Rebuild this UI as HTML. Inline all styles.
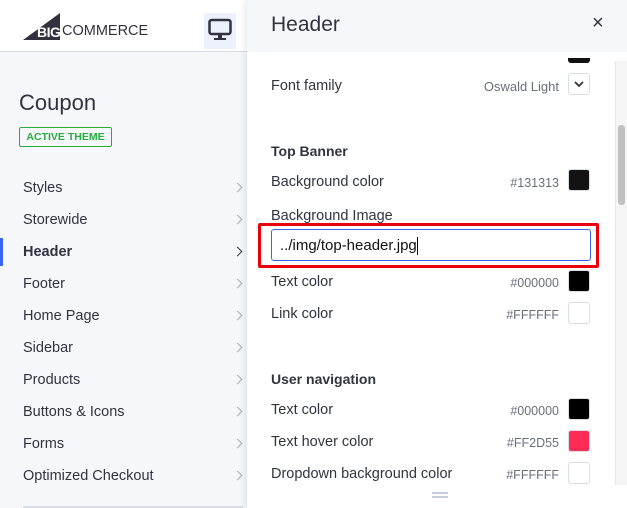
<!DOCTYPE html>
<html><head><style>
*{margin:0;padding:0;box-sizing:border-box}
body{width:627px;height:508px;overflow:hidden;font-family:"Liberation Sans",sans-serif;background:#fff;position:relative;color:#313440}
.left{position:absolute;left:0;top:0;width:247px;height:508px;background:#f5f7fb}
.top{position:absolute;left:0;top:0;width:247px;height:52px;background:#fff;border-bottom:1px solid #d9dce9}
.nav{position:absolute;left:23px;font-size:14.5px;color:#313440}
.chev{position:absolute;left:234px;width:7px;height:7px;border-right:1.6px solid #a8acb8;border-top:1.6px solid #a8acb8;transform:rotate(45deg)}
.right{position:absolute;left:247px;top:0;width:380px;height:508px;background:#fff;box-shadow:-3px 0 6px rgba(0,0,0,.08)}
.rh{position:absolute;left:0;top:0;width:380px;height:52px;background:#f5f7fb}
.lab{position:absolute;left:271px;font-size:14.5px;color:#313440}
.hex{position:absolute;right:68px;font-size:12.5px;color:#6b6f7c}
.sw{position:absolute;left:568px;width:22px;height:22px;border-radius:3px;border:1px solid #d9dce9}
.sec{position:absolute;left:271px;font-size:14px;font-weight:bold;color:#313440}
</style></head><body>
<div class="left"></div>
<div class="top">
<svg style="position:absolute;left:23px;top:13px" width="40" height="27"><polygon points="0,27 37,0 37,27" fill="#34313f"/></svg>
<div style="position:absolute;left:37px;top:24px;font-size:14px;font-weight:bold;color:#fff;letter-spacing:-0.5px">BIG</div>
<div style="position:absolute;left:62px;top:23px;font-size:14.5px;color:#34313f;letter-spacing:0px">COMMERCE</div>
<div style="position:absolute;left:204px;top:13px;width:32px;height:36px;background:#edf0fd"></div>
<svg style="position:absolute;left:208px;top:18px" width="24" height="24"><rect x="1.5" y="2" width="21" height="14" rx="2" fill="none" stroke="#313440" stroke-width="2.5"/><rect x="10" y="16" width="4" height="4" fill="#313440"/><rect x="6" y="20" width="12" height="2" fill="#313440"/></svg>
</div>
<div style="position:absolute;left:19px;top:90px;font-size:22px;color:#313440">Coupon</div>
<div style="position:absolute;left:19px;top:127px;width:93px;height:20px;border:1px solid #2aab3d;border-radius:2px;font-size:10.5px;font-weight:bold;color:#2aab3d;text-align:center;line-height:18px">ACTIVE THEME</div>
<div style="position:absolute;left:0;top:238px;width:3px;height:28px;background:#3c64f4"></div>
<div class="nav" style="top:180px">Styles</div><div class="chev" style="top:184px"></div>
<div class="nav" style="top:212px">Storewide</div><div class="chev" style="top:216px"></div>
<div class="nav" style="top:244px;font-weight:bold">Header</div><div class="chev" style="top:248px;border-color:#313440"></div>
<div class="nav" style="top:276px">Footer</div><div class="chev" style="top:280px"></div>
<div class="nav" style="top:308px">Home Page</div><div class="chev" style="top:312px"></div>
<div class="nav" style="top:340px">Sidebar</div><div class="chev" style="top:344px"></div>
<div class="nav" style="top:372px">Products</div><div class="chev" style="top:376px"></div>
<div class="nav" style="top:404px">Buttons &amp; Icons</div><div class="chev" style="top:408px"></div>
<div class="nav" style="top:436px">Forms</div><div class="chev" style="top:440px"></div>
<div class="nav" style="top:468px">Optimized Checkout</div><div class="chev" style="top:472px"></div>
<div style="position:absolute;left:23px;top:506px;width:220px;height:2px;background:#d9dce9"></div>

<div class="right"><div class="rh"></div>
<div style="position:absolute;left:368px;top:61px;width:12px;height:424px;background:#f5f5f5;border-left:1px solid #e6e6e6"></div>
<div style="position:absolute;left:371px;top:125px;width:7px;height:80px;background:#c1c1c1;border-radius:3px"></div>
</div>
<div style="position:absolute;left:271px;top:13px;font-size:21px;color:#313440">Header</div>
<div style="position:absolute;left:592px;top:12px;font-size:20px;color:#313440">×</div>
<div style="position:absolute;left:568px;top:58px;width:22px;height:5px;background:#111;border-radius:0 0 3px 3px"></div>
<div class="lab" style="top:78px">Font family</div>
<div class="hex" style="top:79px;font-size:13px">Oswald Light</div>
<div class="sw" style="top:73px;background:#fff"><svg width="20" height="20"><path d="M6 8l4 4 4-4" fill="none" stroke="#313440" stroke-width="1.8"/></svg></div>
<div class="sec" style="top:143px">Top Banner</div>
<div class="lab" style="top:174px">Background color</div><div class="hex" style="top:176px">#131313</div><div class="sw" style="top:169px;background:#131313"></div>
<div class="lab" style="top:208px">Background Image</div>
<div style="position:absolute;left:258px;top:223px;width:341px;height:45px;border:3px solid #e8000d;border-radius:2px"></div>
<div style="position:absolute;left:271px;top:229px;width:320px;height:32px;border:1px solid #3c64f4;border-radius:3px;font-size:15px;line-height:31px;padding-left:8px;color:#111">../img/top-header.jpg<span style="display:inline-block;width:1px;height:18px;background:#000;vertical-align:middle"></span></div>
<div class="lab" style="top:274px">Text color</div><div class="hex" style="top:276px">#000000</div><div class="sw" style="top:270px;background:#000"></div>
<div class="lab" style="top:306px">Link color</div><div class="hex" style="top:308px">#FFFFFF</div><div class="sw" style="top:302px;background:#fff"></div>
<div class="sec" style="top:371px">User navigation</div>
<div class="lab" style="top:402px">Text color</div><div class="hex" style="top:404px">#000000</div><div class="sw" style="top:398px;background:#000"></div>
<div class="lab" style="top:434px">Text hover color</div><div class="hex" style="top:436px">#FF2D55</div><div class="sw" style="top:430px;background:#ff2d55"></div>
<div class="lab" style="top:466px">Dropdown background color</div><div class="hex" style="top:468px">#FFFFFF</div><div class="sw" style="top:462px;background:#fff"></div>
<div style="position:absolute;left:432px;top:492px;width:16px;height:1.5px;background:#c5cbe0"></div>
<div style="position:absolute;left:432px;top:496px;width:16px;height:1.5px;background:#c5cbe0"></div>
</body></html>
